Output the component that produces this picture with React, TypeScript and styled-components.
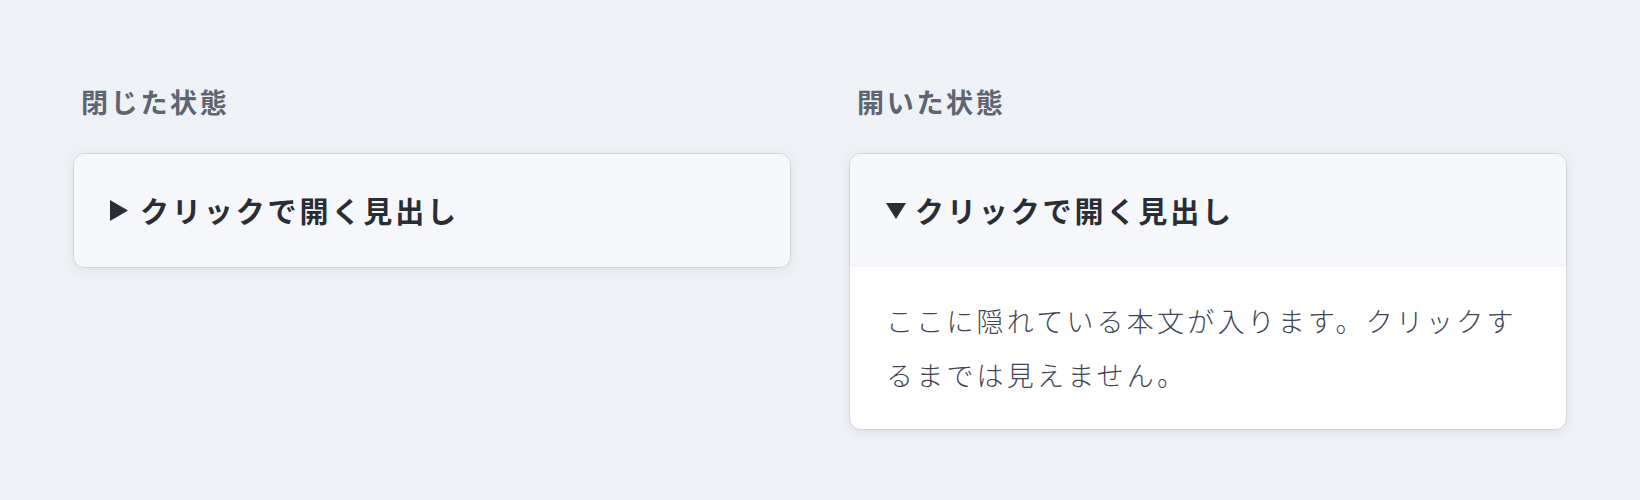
import React from "react";
import styled, { createGlobalStyle } from "styled-components";

const GlobalStyle = createGlobalStyle`
  body {
    margin: 0;
    background-color: #eef1f5;
    font-family: "Noto Sans CJK JP", "Noto Sans", sans-serif;
  }
`;

const Page = styled.div`
  display: grid;
  grid-template-columns: 1fr 1fr;
  gap: 58px;
  align-items: start;
  padding: 82px 73px;
  min-height: 500px;
  box-sizing: border-box;
`;

const Column = styled.section`
  display: flex;
  flex-direction: column;
`;

const Label = styled.h2`
  margin: 0 0 31px 8px;
  font-size: 27px;
  line-height: 40px;
  font-weight: 700;
  letter-spacing: 0.1em;
  color: #5d6472;
`;

const Card = styled.details`
  border: 1px solid #d3d5da;
  border-radius: 12px;
  overflow: hidden;
  background-color: #ffffff;
  box-shadow: 0 2px 12px rgba(30, 40, 60, 0.08);
`;

const Summary = styled.summary`
  list-style: none;
  display: flex;
  align-items: center;
  height: 113px;
  padding: 0 36px;
  background-color: #f5f7fa;
  cursor: pointer;
  &::-webkit-details-marker {
    display: none;
  }
`;

const Marker = styled.span<{ $open: boolean }>`
  display: flex;
  flex-shrink: 0;
  margin-right: ${(p) => (p.$open ? "9px" : "12px")};
  color: #2a2d34;
`;

const Heading = styled.span`
  font-size: 29px;
  line-height: 43px;
  font-weight: 700;
  letter-spacing: 0.1em;
  color: #2a2d34;
`;

const Body = styled.div`
  padding: 27px 36px 27px;
  font-size: 27px;
  line-height: 54px;
  font-weight: 300;
  letter-spacing: 3.2px;
  color: #3f4453;
`;

const Triangle = ({ open }: { open: boolean }) =>
  open ? (
    <svg width="20" height="16" viewBox="0 0 20 16">
      <polygon points="0,0 20,0 10,16" fill="currentColor" />
    </svg>
  ) : (
    <svg width="18" height="21" viewBox="0 0 18 21">
      <polygon points="0,0 18,10.5 0,21" fill="currentColor" />
    </svg>
  );

const Accordion = ({
  title,
  body,
  open,
}: {
  title: string;
  body: string;
  open: boolean;
}) => (
  <Card open={open}>
    <Summary onClick={(e) => e.preventDefault()}>
      <Marker $open={open}>
        <Triangle open={open} />
      </Marker>
      <Heading>{title}</Heading>
    </Summary>
    {open && <Body>{body}</Body>}
  </Card>
);

const examples = [
  { label: "閉じた状態", open: false },
  { label: "開いた状態", open: true },
];

const App = () => {
  return (
    <>
      <GlobalStyle />
      <Page>
        {examples.map((ex) => (
          <Column key={ex.label}>
            <Label>{ex.label}</Label>
            <Accordion
              open={ex.open}
              title="クリックで開く見出し"
              body="ここに隠れている本文が入ります。クリックするまでは見えません。"
            />
          </Column>
        ))}
      </Page>
    </>
  );
};

export default App;
